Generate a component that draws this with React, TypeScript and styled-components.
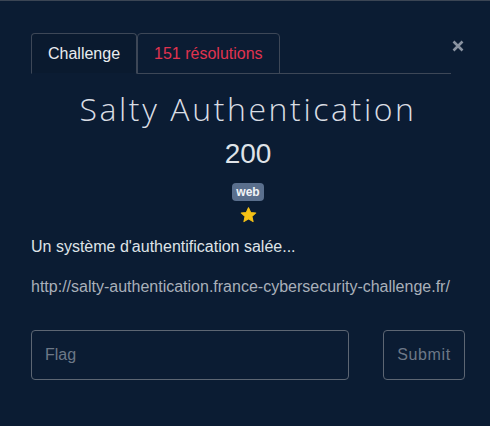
import React from "react";
import styled, { createGlobalStyle } from "styled-components";

const Global = createGlobalStyle`
  html, body { margin: 0; padding: 0; background: #0b1c33; }
  body { font-family: "Liberation Sans", Arial, sans-serif; }
`;

const Modal = styled.div`
  box-sizing: border-box;
  width: 490px;
  height: 426px;
  background: #0b1c33;
  border-top: 1px solid #3b4554;
  padding: 32px 25px 0 31px;
  color: #e6e9ee;
`;

const Header = styled.div`
  display: flex;
  align-items: flex-start;
`;

const Tabs = styled.div`
  display: flex;
  width: 420px;
  border-bottom: 1px solid #3d4757;
`;

const Tab = styled.div<{ $active?: boolean }>`
  box-sizing: border-box;
  height: 41px;
  display: flex;
  align-items: center;
  padding: 0 16px;
  margin-bottom: -1px;
  font-size: 16px;
  border: 1px solid #3d4757;
  border-bottom-color: ${(p) => (p.$active ? "#0b1c33" : "#3d4757")};
  border-radius: 4px 4px 0 0;
  color: ${(p) => (p.$active ? "#e9ecf0" : "#e0334f")};
  background: ${(p) => (p.$active ? "#0a1a2f" : "transparent")};
`;

const Close = styled.button`
  margin-left: auto;
  margin-top: 1px;
  background: none;
  border: none;
  padding: 0;
  width: 14px;
  height: 24px;
  display: flex;
  align-items: center;
  justify-content: center;
  color: #8a93a1;
  cursor: pointer;
`;

const Title = styled.h2`
  margin: 16px 0 0;
  text-align: center;
  font-family: "Open Sans", "Lato", sans-serif;
  font-weight: 300;
  font-size: 32px;
  line-height: 1.2;
  letter-spacing: 2.6px;
  color: #d9dde3;
`;

const Points = styled.div`
  margin-top: 9px;
  text-align: center;
  font-size: 28px;
  line-height: 1.2;
  color: #dfe3e8;
`;

const Tags = styled.div`
  display: flex;
  flex-direction: column;
  align-items: center;
  margin-top: 12px;
  gap: 6px;
`;

const Badge = styled.span`
  box-sizing: border-box;
  display: inline-flex;
  align-items: center;
  height: 18px;
  background: #5a6f8d;
  color: #f2f4f7;
  font-weight: 700;
  font-size: 12px;
  line-height: 1;
  padding: 0 4px;
  border-radius: 4px;
`;

const Description = styled.p`
  margin: 12px 0 0;
  font-size: 16px;
  line-height: 24px;
  color: #dfe3e8;
`;

const Link = styled.p`
  margin: 16px 0 0;
  font-size: 16px;
  line-height: 24px;
  color: #a9b0ba;
`;

const Form = styled.form`
  display: flex;
  gap: 34px;
  margin-top: 31px;
`;

const Input = styled.input`
  box-sizing: border-box;
  width: 318px;
  height: 50px;
  background: transparent;
  border: 1px solid #5d6673;
  border-radius: 4px;
  padding: 0 13px;
  font-family: "Liberation Sans", Arial, sans-serif;
  font-size: 16px;
  color: #e6e9ee;
  &::placeholder { color: #6d7887; }
`;

const Submit = styled.button`
  box-sizing: border-box;
  width: 82px;
  height: 50px;
  background: transparent;
  border: 1px solid #5d6673;
  border-radius: 4px;
  font-family: "Liberation Sans", Arial, sans-serif;
  font-size: 16px;
  letter-spacing: 0.6px;
  color: #6d7887;
  padding: 0;
`;

const Star = () => (
  <svg width="17" height="16" viewBox="0 0 24 23">
    <polygon
      points="12,1 15.1,8 22.5,8.6 16.9,13.6 18.6,21 12,17.1 5.4,21 7.1,13.6 1.5,8.6 8.9,8"
      fill="#f5c116"
      stroke="#f5c116"
      strokeWidth="1.5"
      strokeLinejoin="round"
    />
  </svg>
);

export default function App() {
  return (
    <>
      <Global />
      <Modal>
        <Header>
          <Tabs>
            <Tab $active>Challenge</Tab>
            <Tab>151 résolutions</Tab>
          </Tabs>
          <Close aria-label="close">
            <svg width="12" height="12" viewBox="0 0 12 12">
              <path d="M1.5 1.5 L10.5 10.5 M10.5 1.5 L1.5 10.5" stroke="currentColor" strokeWidth="2.6" strokeLinecap="butt" />
            </svg>
          </Close>
        </Header>
        <Title>Salty Authentication</Title>
        <Points>200</Points>
        <Tags>
          <Badge>web</Badge>
          <Star />
        </Tags>
        <Description>Un système d'authentification salée...</Description>
        <Link>http://salty-authentication.france-cybersecurity-challenge.fr/</Link>
        <Form onSubmit={(e) => e.preventDefault()}>
          <Input placeholder="Flag" />
          <Submit type="submit">Submit</Submit>
        </Form>
      </Modal>
    </>
  );
}
